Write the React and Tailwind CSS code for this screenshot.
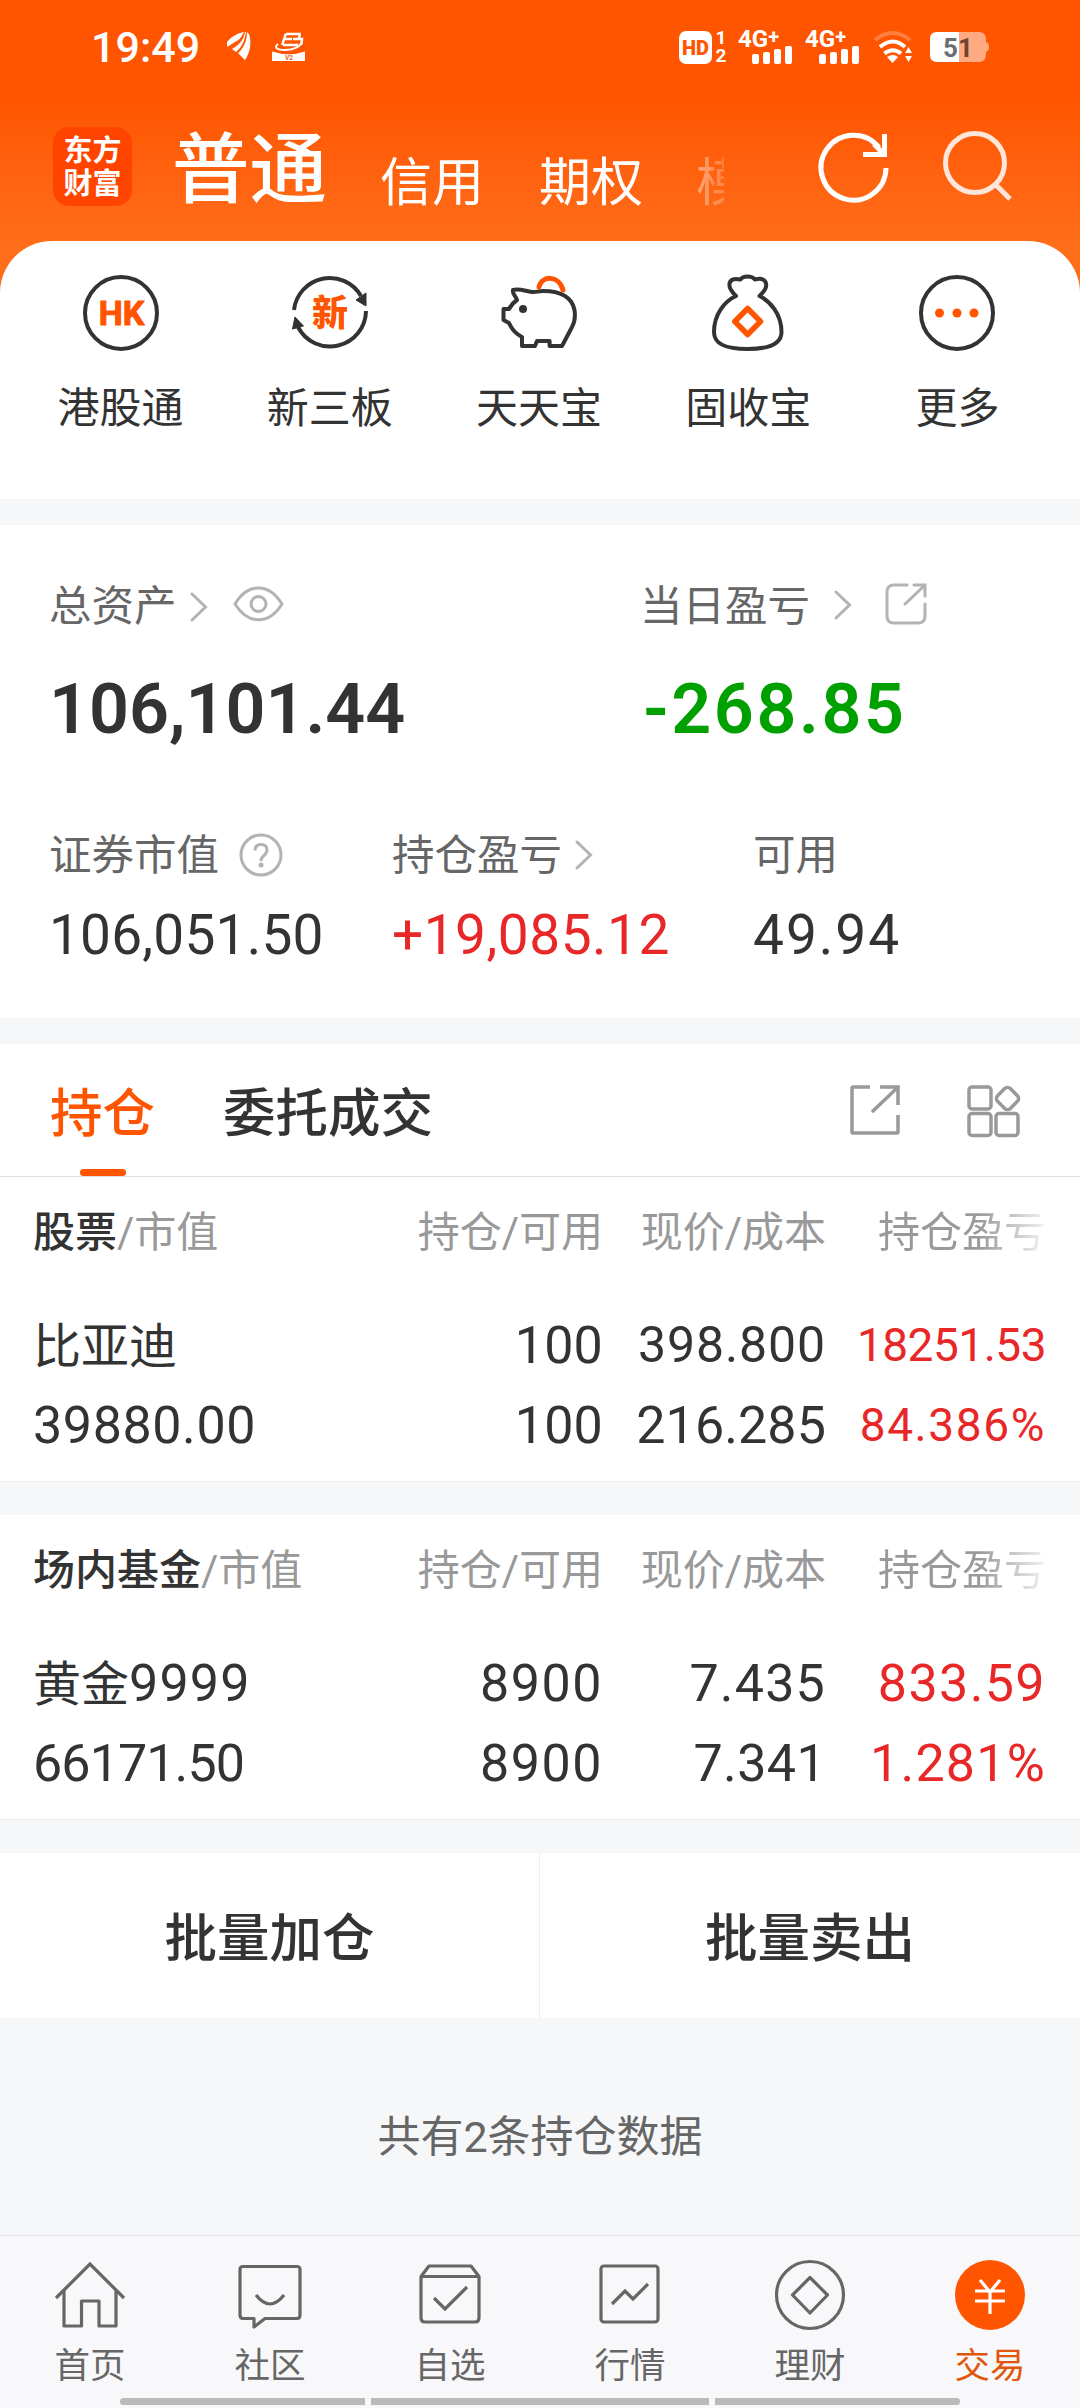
import React from "react";

const DARK = "#333333";
const ORANGE = "#ff5500";

function Svg({ w, h, className = "", children, stroke = "none", sw = 3 }) {
  return (
    <svg
      width={w}
      height={h}
      viewBox={`0 0 ${w} ${h}`}
      fill="none"
      stroke={stroke}
      strokeWidth={sw}
      className={`shrink-0 overflow-visible ${className}`}
    >
      {children}
    </svg>
  );
}

/* ---------- status bar ---------- */

function Signal({ className = "" }) {
  return (
    <div className={`flex h-[33px] w-[54px] shrink-0 flex-col ${className}`}>
      <span className="h-[15px] text-[24px] leading-[17px] font-bold whitespace-nowrap">
        4G<span className="relative -top-[3px] text-[20px]">+</span>
      </span>
      <div className="flex h-[18px] items-end gap-[4px] self-end">
        <i className="h-[10px] w-[7px] rounded-[2px] bg-white" />
        <i className="h-[12px] w-[7px] rounded-[2px] bg-white" />
        <i className="h-[15px] w-[7px] rounded-[2px] bg-white" />
        <i className="h-[18px] w-[7px] rounded-[2px] bg-white" />
      </div>
    </div>
  );
}

function StatusBar() {
  return (
    <div className="flex h-[94px] items-center pl-[91px] text-white">
      <span className="w-[136px] text-[43px] leading-[44px] font-medium">19:49</span>
      <Svg w={24} h={28} className="-mt-[3px]">
        <g fill="#fff">
          <path d="M0 10C5 4 11 1 17 0C14 6 11 9 8 10L0 15Z" />
          <path d="M18 0C17 6 14 12 5 17L9 20C15 15 18 8 19 0Z" />
          <path d="M20 0C20 8 17 16 11 21L18 28C23 21 25 10 22 2Z" />
        </g>
      </Svg>
      <Svg w={33} h={30} className="ml-[21px]">
        <g transform="skewX(-8)" stroke="#fff">
          <path d="M14 2H29M13 7H21M13 13H28M14 2L12 13M28 2V7M22 7H31V13" strokeWidth="2.500" />
        </g>
        <path d="M6 12C1 16 6 18 13 18C21 18 28 15 30 10" stroke="#fff" strokeWidth="2" />
        <path d="M0 19.500Q17 25 33 19.500V29H0Z" fill="#fff" />
        <text x="17" y="28" fontSize="6.500" fontWeight="700" textAnchor="middle" fill="#e8641d">
          V2
        </text>
      </Svg>
      <Svg w={33} h={33} className="ml-[374px]">
        <rect width="33" height="33" rx="7" fill="#fff" />
        <text x="16.500" y="24" fontSize="20" fontWeight="900" textAnchor="middle" fill={ORANGE}>
          HD
        </text>
      </Svg>
      <div className="ml-[2px] flex w-[14px] flex-col text-center text-[19px] leading-[18px] font-bold">
        <span>1</span>
        <span>2</span>
      </div>
      <Signal className="ml-[10px]" />
      <Signal className="ml-[13px]" />
      <Svg w={40} h={33} className="ml-[14px]" stroke="#fff" sw={4}>
        <path d="M2 9Q20 -5 37 9" opacity="0.25" />
        <path d="M7 16Q20 5 32 16" />
        <path d="M11.500 22.500Q20 16 28 22.500" />
        <path d="M14 26Q20 22 25 26L19.500 32Z" fill="#fff" stroke="none" />
        <path d="M32 22L35.500 16L39 22ZM32 25L35.500 31L39 25Z" fill="#fff" stroke="none" />
      </Svg>
      <Svg w={60} h={30} className="ml-[17px]">
        <path d="M7 0H29V30H7Q0 30 0 23V7Q0 0 7 0Z" fill="#fff" />
        <path
          d="M29 0H49Q56 0 56 8V10Q59 11 59 15Q59 19 56 20V22Q56 30 49 30H29Z"
          fill="#ffaa80"
        />
        <text x="13" y="24.500" fontSize="26" fontWeight="700" fill="#6b6e72">
          5
        </text>
        <text x="28" y="24.500" fontSize="26" fontWeight="700" fill="#6d4433">
          1
        </text>
      </Svg>
    </div>
  );
}

/* ---------- header ---------- */

function Header() {
  return (
    <div className="flex h-[147px] pl-[53px] text-white">
      <div className="mt-[33px] flex h-[79px] w-[79px] shrink-0 flex-col items-center justify-center rounded-[16px] bg-[#ff4400] pt-[2px] text-[29px] leading-[33px] font-bold">
        <span>东方</span>
        <span>财富</span>
      </div>
      <span className="mt-[38px] ml-[40px] w-[208px] text-[77.500px] leading-[78px] font-medium">普通</span>
      <span className="mt-[63px] w-[159px] text-[52px] leading-[54px]">信用</span>
      <span className="mt-[63px] w-[157px] text-[52px] leading-[54px]">期权</span>
      <span className="mt-[63px] w-[28px] overflow-hidden bg-linear-to-r from-white/45 to-white/20 bg-clip-text text-[52px] leading-[54px] text-transparent">
        模
      </span>
      <Svg w={72} h={72} className="mt-[38px] ml-[94px]" stroke="#fff" sw={5}>
        <path d="M68 36A32.500 32.500 0 1 1 61 15.500" />
        <path d="M66.500 2V22.500H45M66 22.500L56 12" />
      </Svg>
      <Svg w={72} h={72} className="mt-[37px] ml-[53px]" stroke="#ffe6da" sw={5}>
        <circle cx="32" cy="32" r="29.500" />
        <path d="M52 53L67 68" />
      </Svg>
    </div>
  );
}

/* ---------- shortcuts ---------- */

const shortcuts = [
  {
    label: "港股通",
    icon: (
      <Svg w={78} h={78} stroke={DARK} sw={4}>
        <circle cx="39" cy="39" r="36" />
        <text
          x="39.500"
          y="51"
          fontSize="34"
          fontWeight="700"
          textAnchor="middle"
          fill={ORANGE}
          stroke={ORANGE}
          strokeWidth="1"
          strokeLinejoin="round"
        >
          HK
        </text>
      </Svg>
    ),
  },
  {
    label: "新三板",
    icon: (
      <Svg w={78} h={78} stroke={DARK} sw={4}>
        <path d="M3 36A36 36 0 0 1 70 22" />
        <path d="M75 37A36 36 0 0 1 7 53" />
        <path d="M65 26L75 19V32ZM1.500 55L4 43L12.500 52Z" fill={DARK} stroke={DARK} strokeWidth="1" />
        <text x="39" y="52" fontSize="36" fontWeight="900" textAnchor="middle" fill={ORANGE} stroke="none">
          新
        </text>
      </Svg>
    ),
  },
  {
    label: "天天宝",
    icon: (
      <Svg w={78} h={78} stroke={DARK} sw={4}>
        <path
          d="M43 17C38 17 36 18.500 32 18C25 17 19 14 13 16C12 20 16 22 17 26C14 28 11 31 9 35H3.500V46L9 49C12 56 16 60 22 63V72H35L37 67H49.600V72H62L72 53C75 48 75.500 43 74.500 36C72 24 62 17 43 17Z"
          strokeLinejoin="round"
        />
        <circle cx="23" cy="35" r="4" fill={DARK} stroke="none" />
        <path d="M39 13C42 1 59 1 63 16" stroke={ORANGE} strokeWidth="5" strokeLinecap="round" />
      </Svg>
    ),
  },
  {
    label: "固收宝",
    icon: (
      <Svg w={76} h={78} stroke={DARK} sw={4}>
        <path
          d="M26 22C15 27 4 40 4 58C4 70 15 75 37.600 75C60 75 71.500 70 71.500 58C71.500 40 60 27 49.500 22C55 17 57.500 12 55.500 8C53.500 4 49 4.500 45 5.500C42 1.500 33 1.500 30.500 5.500C26 4.500 22 4 20 8C18 12 21 17 26 22Z"
          strokeLinejoin="round"
        />
        <path
          d="M37.600 34.500L50.500 47.500L37.600 60.500L24.800 47.500Z"
          stroke={ORANGE}
          strokeWidth="5.500"
          strokeLinejoin="round"
        />
      </Svg>
    ),
  },
  {
    label: "更多",
    icon: (
      <Svg w={78} h={78} stroke={DARK} sw={4}>
        <circle cx="39" cy="39" r="36" />
        <g fill={ORANGE} stroke="none">
          <circle cx="21.500" cy="39" r="4.500" />
          <circle cx="39" cy="39" r="4.500" />
          <circle cx="56" cy="39" r="4.500" />
        </g>
      </Svg>
    ),
  },
];

function Shortcuts() {
  return (
    <div className="grid h-[258px] grid-cols-5 rounded-t-[52px] bg-white pt-[33px] pr-[18px] pl-[16px]">
      {shortcuts.map((s) => (
        <div key={s.label} className="flex flex-col items-center">
          {s.icon}
          <span className="mt-[33px] text-[42px] leading-[48px] text-[#333]">{s.label}</span>
        </div>
      ))}
    </div>
  );
}

/* ---------- account summary ---------- */

function Chevron({ className }) {
  return (
    <Svg w={18} h={30} className={className} stroke="#b3b3b3" sw={3}>
      <path d="M2 2L15.500 15L2 28" strokeLinecap="round" />
    </Svg>
  );
}

function Summary() {
  return (
    <div className="h-[493px] bg-white pt-[58px] pl-[49px] text-[#333]">
      <div className="flex text-[42.500px] leading-[48px] text-[#666]">
        <div className="flex w-[591px] items-center">
          <span>总资产</span>
          <Chevron className="ml-[13px]" />
          <Svg w={51} h={36} className="-mt-[7px] ml-[25px]" stroke="#b3b3b3" sw={3}>
            <path d="M2 18C15 -3.500 36 -3.500 49 18C36 39 15 39 2 18Z" strokeLinejoin="round" />
            <circle cx="25.500" cy="18" r="7.500" />
          </Svg>
        </div>
        <div className="flex items-center">
          <span>当日盈亏</span>
          <Chevron className="-mt-[5px] ml-[24px]" />
          <Svg w={42} h={42} className="-mt-[6px] ml-[33px]" stroke="#b3b3b3" sw={3}>
            <path d="M22 2H9Q2 2 2 9V33Q2 40 9 40H33Q40 40 40 33V21" strokeLinecap="round" />
            <path d="M29 2H40V13M39 3L20 21" strokeLinecap="round" />
          </Svg>
        </div>
      </div>
      <div className="mt-[38px] flex text-[70px] leading-[80px] font-semibold">
        <span className="w-[594px]">106,101.44</span>
        <span className="tracking-[2.600px] text-[#00a000]">-268.85</span>
      </div>
      <div className="mt-[82px] flex">
        <div className="flex w-[343px] flex-col">
          <div className="flex h-[50px] items-center text-[42.500px] text-[#666]">
            证券市值
            <Svg w={44} h={44} className="-mt-[3px] ml-[20px]" stroke="#b3b3b3" sw={3}>
              <circle cx="22" cy="22" r="20" />
              <path d="M16 17.500Q16 11.500 22 11.500Q28 11.500 28 17Q28 20 25 22.500Q22 25 22 28" />
              <circle cx="22" cy="32" r="2.500" fill="#b3b3b3" stroke="none" />
            </Svg>
          </div>
          <span className="mt-[22px] text-[55px] leading-[64px] font-[450] tracking-[0.200px]">106,051.50</span>
        </div>
        <div className="flex w-[361px] flex-col">
          <div className="flex h-[50px] items-center text-[42.500px] text-[#666]">
            持仓盈亏
            <Chevron className="-mt-[2px] ml-[13px]" />
          </div>
          <span className="mt-[22px] text-[55px] leading-[64px] font-[450] tracking-[0.500px] text-[#e82828]">
            +19,085.12
          </span>
        </div>
        <div className="flex flex-col">
          <div className="flex h-[50px] items-center text-[42.500px] text-[#666]">可用</div>
          <span className="mt-[22px] text-[55px] leading-[64px] font-[450] tracking-[2px]">49.94</span>
        </div>
      </div>
    </div>
  );
}

/* ---------- holdings ---------- */

function Tabs() {
  return (
    <div className="flex h-[133px] border-b border-[#dddddd] bg-white pl-[50px] text-[52.500px] leading-[60px] font-medium">
      <div className="flex w-[105px] flex-col items-center pt-[40px] text-[#ff5500]">
        持仓
        <i className="mt-[25px] h-[7px] w-[46px] rounded-full bg-[#ff5500]" />
      </div>
      <span className="mt-[40px] ml-[68px] w-[627px] text-[#333]">委托成交</span>
      <Svg w={50} h={50} className="mt-[41px]" stroke="#999" sw={3.5}>
        <path d="M20 2H3Q2 2 2 3V47Q2 48 3 48H47Q48 48 48 47V30" />
        <path d="M30 2H48V20M47 3L22 27" />
      </Svg>
      <Svg w={54} h={54} className="mt-[41px] ml-[67px]" stroke="#999" sw={3.5}>
        <rect x="2" y="2" width="22" height="22" rx="3" />
        <rect x="2" y="28.500" width="22" height="22" rx="3" />
        <rect x="29" y="28.500" width="22" height="22" rx="3" />
        <rect x="31.500" y="4.500" width="18" height="18" rx="4" transform="rotate(45 40.500 13.500)" />
      </Svg>
    </div>
  );
}

function Holding({ kind, name, value, qty, avail, price, cost, profit, rate }) {
  return (
    <div className="h-[305px] border-b border-[#e8eaec] bg-white pl-[33px] text-[#333]">
      <div className="grid grid-cols-[347px_223px_223px_220px] pt-[28px] text-right text-[42px] leading-[56px] whitespace-nowrap text-[#999]">
        <span className="text-left">
          <span className="font-medium text-[#333]">{kind}</span>/市值
        </span>
        <span>持仓/可用</span>
        <span>现价/成本</span>
        <span>
          <span className="bg-linear-to-r from-[#999] from-60% to-[#f4f4f4] bg-clip-text text-transparent">
            持仓盈亏
          </span>
        </span>
      </div>
      <div className="mt-[45px] grid grid-cols-[347px_223px_223px_220px] text-right text-[52px] leading-[79px] font-[450] whitespace-nowrap">
        <span className="text-left text-[48px] font-normal">
          {name[0]}
          <span className="text-[52px] font-[450] tracking-[1.200px]">{name[1]}</span>
        </span>
        <span className={qty[1]}>{qty[0]}</span>
        <span className={price[1]}>{price[0]}</span>
        <span className={`text-[#e82828] ${profit[1]}`}>{profit[0]}</span>
        <span className={`text-left ${value[1]}`}>{value[0]}</span>
        <span className={avail[1]}>{avail[0]}</span>
        <span className={cost[1]}>{cost[0]}</span>
        <span className={`text-[#e82828] ${rate[1]}`}>{rate[0]}</span>
      </div>
    </div>
  );
}

/* ---------- bottom navigation ---------- */

const G = "#666666";
const nav = [
  [
    "首页",
    <Svg w={72} h={72} stroke={G} sw={3.2}>
      <path d="M2 38L36 4L70 38" />
      <path d="M10 30V66H27.500V41H45V66H62V30" strokeLinejoin="round" />
    </Svg>,
  ],
  [
    "社区",
    <Svg w={72} h={72} stroke={G} sw={3.2}>
      <path
        d="M9 6.500H63Q66 6.500 66 9.500V55Q66 58.500 63 58.500H31L20 67V58.500H9Q6 58.500 6 55V9.500Q6 6.500 9 6.500Z"
        strokeLinejoin="round"
      />
      <path d="M22 35Q36 53 50 35" />
    </Svg>,
  ],
  [
    "自选",
    <Svg w={72} h={72} stroke={G} sw={3.2}>
      <path d="M7 16.500L15 6H57L65 16.500V58Q65 62 61 62H11Q7 62 7 58ZM7 16.500H65" strokeLinejoin="round" />
      <path d="M20 38L31 49L53 27" />
    </Svg>,
  ],
  [
    "行情",
    <Svg w={72} h={72} stroke={G} sw={3.2}>
      <rect x="7" y="6" width="57" height="56" rx="3" />
      <path d="M18 44L31 31L39 39L54 24" />
    </Svg>,
  ],
  [
    "理财",
    <Svg w={72} h={72} stroke={G} sw={3.2}>
      <circle cx="36" cy="35" r="33.500" />
      <path d="M36 17.500L53.500 35L36 53L18.500 35Z" strokeLinejoin="round" />
    </Svg>,
  ],
  [
    "交易",
    <Svg w={72} h={72} stroke="#fff" sw={3.2}>
      <circle cx="36" cy="35" r="35" fill={ORANGE} stroke="none" />
      <path d="M26 20L36 32L46 20M36 31V54M21 31H51M21 41H51" />
    </Svg>,
  ],
];

function BottomNav() {
  return (
    <div className="h-[173px] border-t border-[#dfe2e4] bg-[#f8f8fa]">
      <div className="grid h-[162px] grid-cols-6 pt-[24px]">
        {nav.map(([label, icon], i) => (
          <div key={label} className="flex flex-col items-center">
            {icon}
            <span className={`mt-[11px] text-[35.500px] leading-[46px] ${i === 5 ? "text-[#e0560c]" : "text-[#666]"}`}>
              {label}
            </span>
          </div>
        ))}
      </div>
      <div className="mx-[120px] flex h-[7px] gap-[6px]">
        <i className="w-[245px] rounded-l-full bg-[#bababa]" />
        <i className="w-[338px] bg-[#bababa]" />
        <i className="w-[245px] rounded-r-full bg-[#bababa]" />
      </div>
    </div>
  );
}

export default function App() {
  return (
    <div className="flex h-[2408px] w-[1080px] flex-col overflow-hidden bg-[#f6f7f9] font-['Roboto','Noto_Sans_CJK_SC',sans-serif]">
      <div className="bg-linear-to-b from-[#ff5500] from-20% to-[#ff6e1a] to-50%">
        <StatusBar />
        <Header />
        <Shortcuts />
      </div>
      <div className="h-[26px] shrink-0" />
      <Summary />
      <div className="h-[26px] shrink-0" />
      <Tabs />
      <Holding
        kind="股票"
        name={["比亚迪", ""]}
        value={["39880.00", "tracking-[0.600px]"]}
        qty={["100", "tracking-[0.200px]"]}
        avail={["100", "tracking-[0.200px]"]}
        price={["398.800", "text-[50px] tracking-[0.900px]"]}
        cost={["216.285", "tracking-[0.100px]"]}
        profit={["18251.53", "text-[46px] tracking-[-0.500px]"]}
        rate={["84.386%", "text-[46px] tracking-[1.600px]"]}
      />
      <div className="h-[33px] shrink-0" />
      <Holding
        kind="场内基金"
        name={["黄金", "9999"]}
        value={["66171.50", "tracking-[-0.900px]"]}
        qty={["8900", "tracking-[1.500px]"]}
        avail={["8900", "tracking-[1.500px]"]}
        price={["7.435", "tracking-[1.200px]"]}
        cost={["7.341", "tracking-[0.400px]"]}
        profit={["833.59", "tracking-[1.400px]"]}
        rate={["1.281%", "tracking-[1.200px]"]}
      />
      <div className="h-[33px] shrink-0" />
      <div className="grid h-[165px] grid-cols-2 bg-white text-center text-[52.500px] leading-[172px] font-medium text-[#333]">
        <span className="h-[165px] border-r border-[#eeeeee]">批量加仓</span>
        <span className="h-[165px]">批量卖出</span>
      </div>
      <div className="h-[217px] pt-[89px] text-center text-[43px] leading-[60px] text-[#666]">共有2条持仓数据</div>
      <BottomNav />
    </div>
  );
}
